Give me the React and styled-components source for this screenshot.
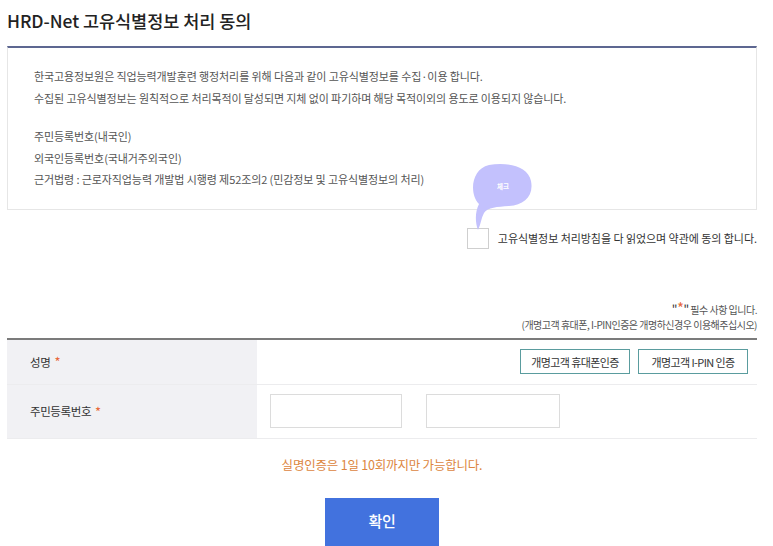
import React from "react";
import styled, { createGlobalStyle } from "styled-components";

const Global = createGlobalStyle`
  html, body { margin: 0; padding: 0; background: #fff; }
  body { font-family: "Noto Sans CJK KR", "Noto Sans", sans-serif; color: #333; }
  * { box-sizing: border-box; }
`;

const Page = styled.div`
  width: 750px;
  margin-left: 7px;
`;

const Title = styled.h2`
  margin: 0;
  height: 46px;
  padding-top: 9px;
  font-size: 17.5px;
  font-weight: 500;
  line-height: 24px;
  letter-spacing: -0.05px;
  color: #222;
`;

const InfoBox = styled.div`
  border-top: 2px solid #5d6791;
  border-left: 1px solid #e6e6e6;
  border-right: 1px solid #e6e6e6;
  border-bottom: 1px solid #e6e6e6;
  padding: 18px 26px 18px;
`;

const Para = styled.p`
  margin: 0 0 17px;
  font-size: 11px;
  line-height: 21.5px;
  letter-spacing: -0.1px;
  color: #555;
  &:last-child { margin-bottom: 0; }
`;

const AgreeRow = styled.div`
  display: flex;
  justify-content: flex-end;
  align-items: center;
  gap: 9px;
  margin-top: 18px;
`;

const CheckWrap = styled.label`
  position: relative;
  display: block;
  width: 22px;
  height: 21px;
`;

const CheckBox = styled.span`
  display: block;
  width: 22px;
  height: 21px;
  border: 1px solid #cfcfcf;
  background: #fff;
`;

const Blob = styled.svg`
  position: absolute;
  left: 5px;
  top: -64px;
  width: 62px;
  height: 66px;
  overflow: visible;
`;

const AgreeText = styled.span`
  font-size: 11px;
  letter-spacing: -0.05px;
  color: #333;
`;

const Notes = styled.div`
  margin-top: 51px;
  text-align: right;
  font-size: 10px;
  line-height: 15px;
  letter-spacing: -0.5px;
  color: #555;
`;

const Star = styled.span`
  color: ${(p) => p.$color || "#e8683a"};
  font-size: ${(p) => p.$size || "inherit"};
  line-height: 1;
`;

const Quote = styled.span`
  color: #333;
  font-size: 12px;
  line-height: 1;
`;

const Table = styled.div`
  margin-top: 6px;
  border-top: 2px solid #7b7b7b;
`;

const Row = styled.div`
  display: grid;
  grid-template-columns: 250px 1fr;
  height: ${(p) => p.$h}px;
  border-bottom: 1px solid #ececee;
`;

const Label = styled.div`
  display: flex;
  align-items: center;
  gap: 4px;
  padding-left: 23px;
  background: #f1f1f4;
  font-size: 11.5px;
  letter-spacing: -0.4px;
  color: #333;
`;

const Cell = styled.div`
  display: flex;
  align-items: center;
  justify-content: ${(p) => (p.$end ? "flex-end" : "flex-start")};
  gap: 8px;
  padding: ${(p) => (p.$end ? "0 9px 0 0" : "0 0 0 13px")};
`;

const AuthButton = styled.button`
  width: 110px;
  height: 25px;
  border: 1.5px solid #5a9c9e;
  background: #fff;
  font-family: inherit;
  font-size: 11px;
  letter-spacing: -0.6px;
  color: #333;
  padding: 0;
  cursor: pointer;
`;

const Input = styled.input`
  width: ${(p) => p.$w}px;
  height: 34px;
  border: 1px solid #dcdcdc;
  background: #fff;
  padding: 0 8px;
  font-family: inherit;
  outline: none;
`;

const Notice = styled.p`
  margin: 16px 0 0;
  text-align: center;
  font-size: 12.5px;
  letter-spacing: -0.2px;
  color: #dc8640;
`;

const Actions = styled.div`
  display: flex;
  justify-content: center;
  margin-top: 24px;
`;

const Confirm = styled.button`
  width: 114px;
  height: 50px;
  border: none;
  background: #4272de;
  color: #fff;
  font-family: inherit;
  font-size: 15px;
  font-weight: 500;
  letter-spacing: -0.3px;
  padding: 0 0 5px;
  cursor: pointer;
`;

export default function App() {
  return (
    <>
      <Global />
      <Page>
        <Title>HRD-Net 고유식별정보 처리 동의</Title>
        <InfoBox>
          <Para>
            한국고용정보원은 직업능력개발훈련 행정처리를 위해 다음과 같이 고유식별정보를 수집·이용 합니다.
            <br />
            수집된 고유식별정보는 원칙적으로 처리목적이 달성되면 지체 없이 파기하며 해당 목적이외의 용도로 이용되지 않습니다.
          </Para>
          <Para>
            주민등록번호(내국인)
            <br />
            외국인등록번호(국내거주외국인)
            <br />
            근거법령 : 근로자직업능력 개발법 시행령 제52조의2 (민감정보 및 고유식별정보의 처리)
          </Para>
        </InfoBox>

        <AgreeRow>
          <CheckWrap>
            <CheckBox />
            <Blob viewBox="0 0 62 66">
              <path
                d="M7 40 C-3 30 -1 5 17 1 C33 -2 56 1 59 17 C62 32 52 41 37 42 C25 43 16 43 12 49 C9 54 9 60 6 66 C3 58 3 48 7 40 Z"
                fill="#c3c1fd"
              />
              <text
                x="31"
                y="25"
                textAnchor="middle"
                fontSize="6.5"
                fontWeight="700"
                fill="#ffffff"
                fontFamily="Noto Sans CJK KR, sans-serif"
              >
                체크
              </text>
            </Blob>
          </CheckWrap>
          <AgreeText>고유식별정보 처리방침을 다 읽었으며 약관에 동의 합니다.</AgreeText>
        </AgreeRow>

        <Notes>
          <Quote>"</Quote>
          <Star $size="15px">*</Star>
          <Quote>"</Quote> 필수 사항 입니다.
          <br />
          (개명고객 휴대폰, I-PIN인증은 개명하신경우 이용해주십시오)
        </Notes>

        <Table>
          <Row $h={45}>
            <Label>
              성명 <Star $size="13px">*</Star>
            </Label>
            <Cell $end>
              <AuthButton>개명고객 휴대폰인증</AuthButton>
              <AuthButton>개명고객 I-PIN 인증</AuthButton>
            </Cell>
          </Row>
          <Row $h={54}>
            <Label>
              주민등록번호 <Star $size="13px">*</Star>
            </Label>
            <Cell>
              <Input $w={132} />
              <Input $w={134} style={{ marginLeft: 16 }} />
            </Cell>
          </Row>
        </Table>

        <Notice>실명인증은 1일 10회까지만 가능합니다.</Notice>
        <Actions>
          <Confirm>확인</Confirm>
        </Actions>
      </Page>
    </>
  );
}
